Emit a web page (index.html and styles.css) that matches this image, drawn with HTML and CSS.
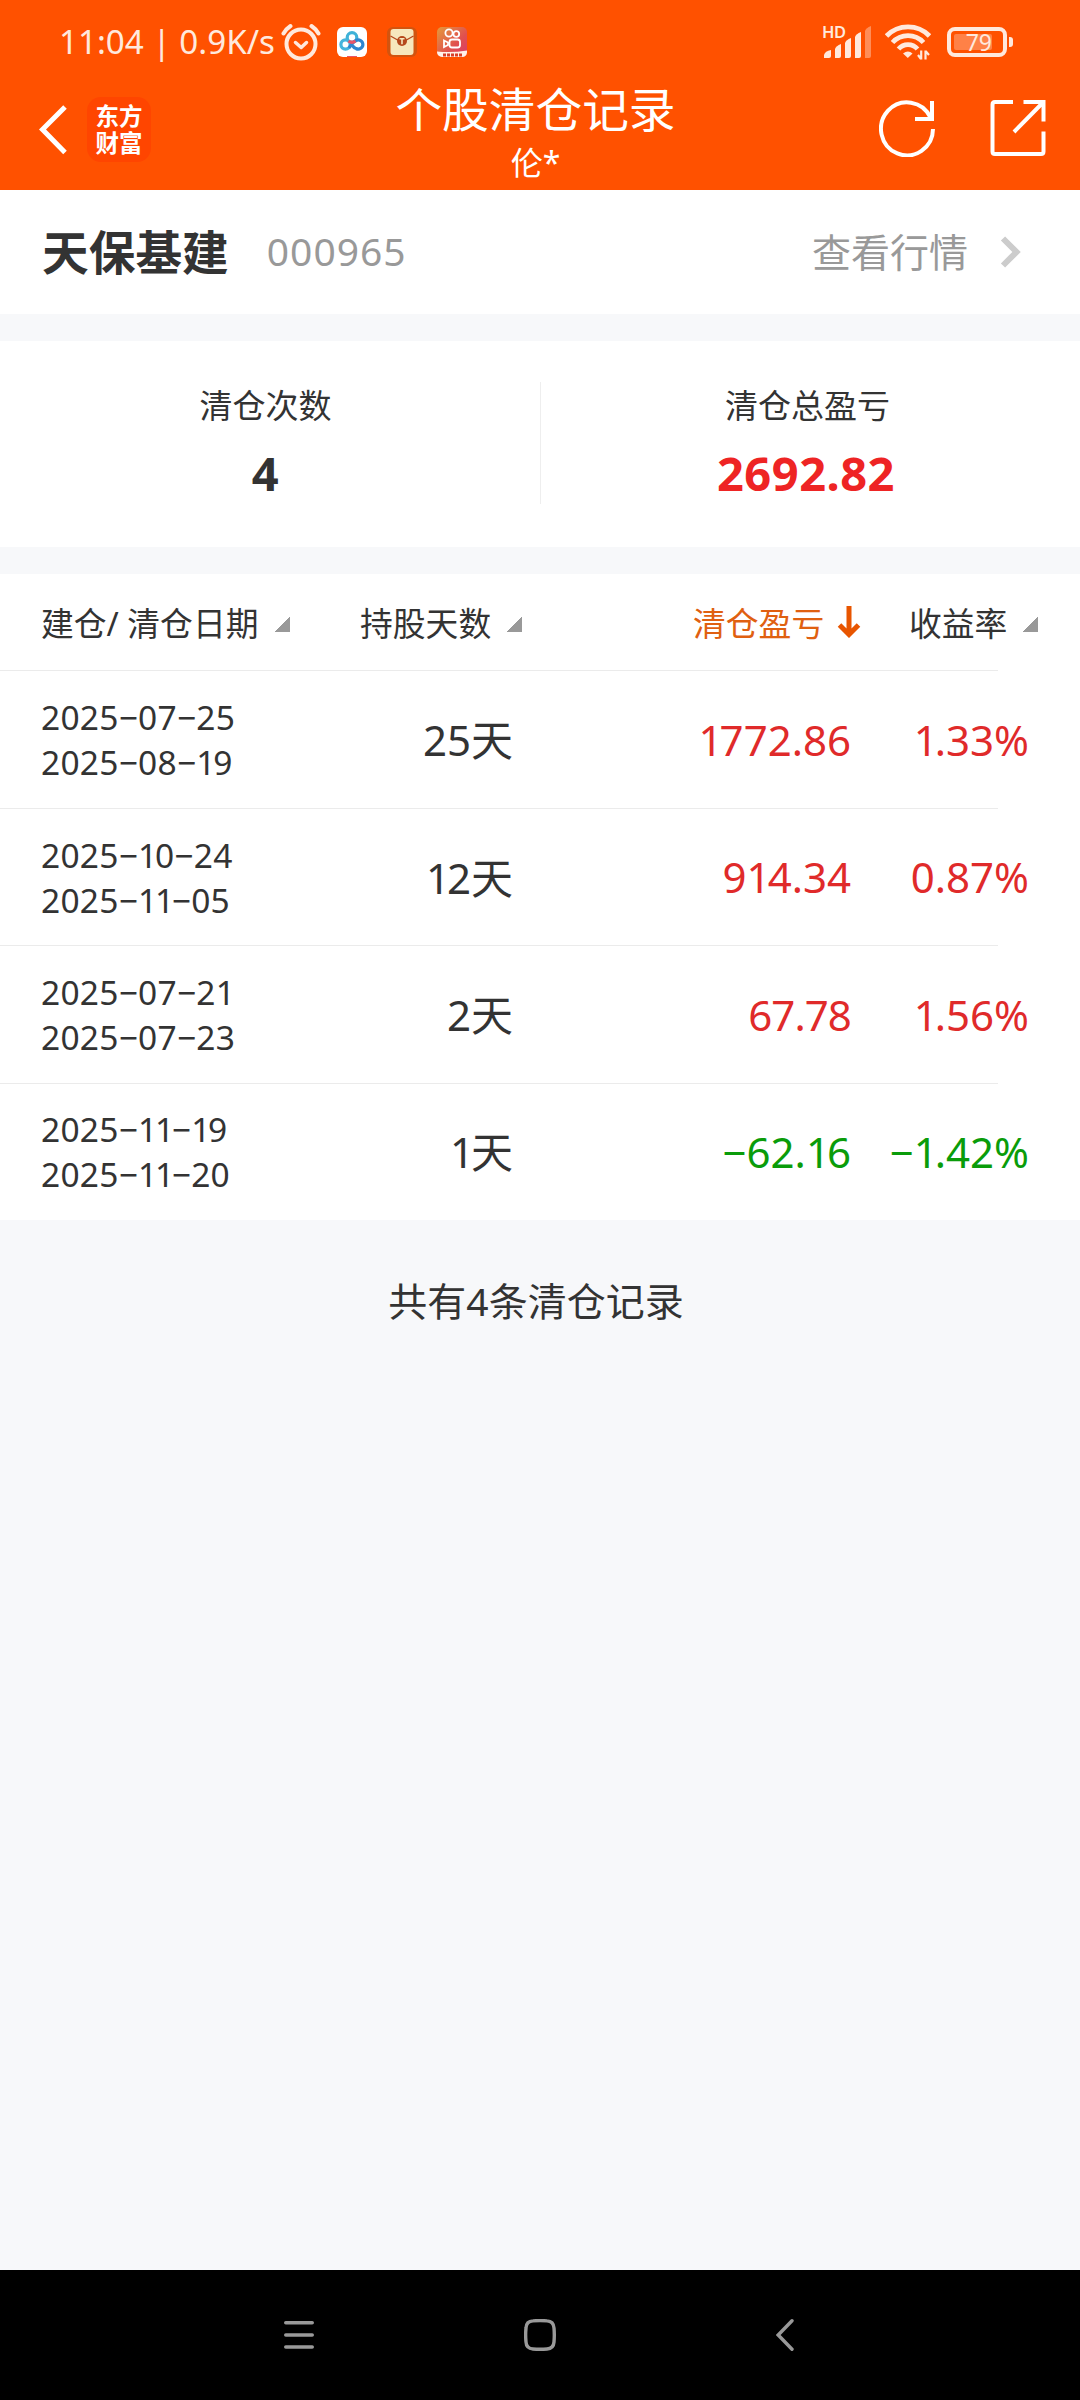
FILE: index.html
```html
<!DOCTYPE html>
<html lang="zh-CN">
<head>
<meta charset="utf-8">
<title>个股清仓记录</title>
<link rel="stylesheet" href="styles.css">
</head>
<body>
<div class="screen">
  <header class="header">
    <div class="status">
      <span class="clock">11:04 | 0.9K/s</span>
      <svg class="alarm" width="40" height="38" viewBox="0 0 40 38" fill="none" stroke="#ffe9dd" stroke-linecap="round" stroke-linejoin="round">
        <circle cx="20" cy="21" r="14.500" stroke-width="4"/>
        <path d="M14.500 19.500l5.700 5 5.300-5" stroke-width="3.500"/>
        <path d="M2.500 10.500Q5 6 9.500 3M37.500 10.500Q35 6 30.500 3" stroke-width="4"/>
      </svg>
      <svg class="app app-cloud" width="30" height="30" viewBox="0 0 30 30">
        <rect width="30" height="30" rx="6" fill="#fff"/>
        <g fill="none" stroke-width="3.200">
          <circle cx="15" cy="10.500" r="4.800" stroke="#3fb2d8"/>
          <circle cx="8.500" cy="17.500" r="4.600" stroke="#45b4dc"/>
          <path d="M12 21q4-6.500 7-7.500a4.600 4.600 0 1 1 0 8q-2-.5-4-3.500" stroke="#2f86cf"/>
          <path d="M11.500 14q3.500 2.500 7 0" stroke="#e8556a"/>
        </g>
        <path d="M10 29.500h10" stroke="#e8556a"/>
      </svg>
      <svg class="app app-mail" width="30" height="30" viewBox="0 0 30 30">
        <rect width="30" height="30" rx="6" fill="#d2540f"/>
        <rect x="3.500" y="2" width="23" height="26" rx="3" fill="#f6e7bd"/>
        <path d="M3.500 9l8 4.500M26.500 9l-8 4.500" stroke="#b5471b" stroke-width="1.300"/>
        <circle cx="15" cy="14" r="5" fill="#b5471b"/>
        <path d="M12.500 11.800h5M15 11.800v5.500" stroke="#f6e7bd" stroke-width="1.600"/>
      </svg>
      <svg class="app app-cam" width="30" height="30" viewBox="0 0 30 30">
        <defs><linearGradient id="cam" x1="0" y1="0" x2="1" y2="1"><stop offset="0" stop-color="#e59a3a"/><stop offset=".6" stop-color="#e0504f"/><stop offset="1" stop-color="#d83a6a"/></linearGradient></defs>
        <rect width="30" height="30" rx="5" fill="url(#cam)"/>
        <g fill="none" stroke="#fff" stroke-width="1.800">
          <circle cx="12" cy="6" r="3.600"/><circle cx="19.300" cy="7" r="2.900"/>
          <rect x="12.500" y="12.500" width="10.500" height="8" rx="2.500"/>
          <path d="M7 13.500l4 2v2.500l-4 2z"/>
        </g>
        <path d="M0 24.500q15 1.500 30-1v2a5 5 0 0 1-5 4.500h-20a5 5 0 0 1-5-5z" fill="#fff2ea"/>
        <path d="M6 28h19" stroke="#d8402a" stroke-width="3" stroke-dasharray="3 1"/>
      </svg>
      <span class="grow"></span>
      <svg class="signal" width="50" height="36" viewBox="0 0 50 36">
        <text x="0" y="14" class="hd" textLength="24">HD</text>
        <g fill="#ffe9dd">
          <path d="M2 34v-3q1-4 7-5v6q0 2-2 2z"/><path d="M13 34v-9q1-3 6-5v12q0 2-2 2z"/><path d="M23 34v-15q1-3 6-5v18q0 2-2 2z"/><path d="M33 34v-21q1-3 6-5v24q0 2-2 2z"/>
          <path d="M43 34v-27q1-3 6-5v30q0 2-2 2z" opacity=".4"/>
        </g>
      </svg>
      <svg class="wifi" width="46" height="36" viewBox="0 0 46 36" fill="none" stroke="#ffe9dd" stroke-width="4.800">
        <path d="M1.500 12a30 30 0 0 1 43 0M7.500 18.500a21 21 0 0 1 31 0M13.500 25a12.500 12.500 0 0 1 19 0"/>
        <path d="M18 29.500q5-4 9.500 0l-4.700 4.500z" fill="#ffe9dd" stroke="none"/>
        <path d="M36.200 26.500v9M33 31l3 4M40.500 35.500v-9M44 31l-3.500-4" stroke-width="2.200"/>
      </svg>
      <div class="battery"><span class="charge">79</span></div>
    </div>
    <div class="titlebar">
      <svg class="back" width="28" height="50" viewBox="0 0 28 50" fill="none" stroke="#fff" stroke-width="5"><path d="M26 2L3.500 24.500 26 47.500"/></svg>
      <div class="logo"><span>东方</span><span>财富</span></div>
      <div class="heading"><h1>个股清仓记录</h1><p>伦*</p></div>
      <svg class="reload" width="57" height="58" viewBox="0 0 57 58" fill="none" stroke="#fff" stroke-width="4">
        <path d="M54 30A26 26.500 0 1 1 51.500 18.500"/><path d="M53 2v18H36"/>
      </svg>
      <svg class="share" width="56" height="58" viewBox="0 0 56 58" fill="none" stroke="#fff" stroke-width="4">
        <path d="M23 3H5Q2.500 3 2.500 5.500V52.500Q2.500 55 5 55H51Q53.500 55 53.500 52.500V32.500"/><path d="M33.500 3H53.500V22.500M53 3.500L24 33"/>
      </svg>
    </div>
  </header>

  <section class="stock">
    <h2>天保基建</h2>
    <span class="code">000965</span>
    <a class="quote">查看行情</a>
    <svg width="22" height="34" viewBox="0 0 22 34" fill="none" stroke="#ccc" stroke-width="6"><path d="M3 3.500L16.500 17 3 30.500"/></svg>
  </section>

  <section class="summary">
    <div class="stat"><span class="label">清仓次数</span><strong>4</strong></div>
    <div class="rule"></div>
    <div class="stat"><span class="label">清仓总盈亏</span><strong class="total">2692.82</strong></div>
  </section>

  <section class="table">
    <div class="row head">
      <div class="c-date">建仓/ 清仓日期<i class="tri"></i></div>
      <div class="c-days">持股天数<i class="tri"></i></div>
      <div class="c-gain active">清仓盈亏<svg width="24" height="32" viewBox="0 0 24 32" fill="none" stroke="#e85500" stroke-width="5"><path d="M12 0v28M2.500 19L12 28.500 21.500 19"/></svg></div>
      <div class="c-rate">收益率<i class="tri"></i></div>
    </div>
    <div class="row">
      <div class="c-date"><span>2025−07−25</span><span>2025−08−<b>1</b>9</span></div>
      <div class="c-days">25天</div><div class="c-gain up"><b>1</b>772.86</div><div class="c-rate up"><b>1</b>.33<em>%</em></div>
    </div>
    <div class="row short">
      <div class="c-date"><span>2025−<b>1</b>0−24</span><span>2025−<b>1</b><b>1</b>−05</span></div>
      <div class="c-days"><b>1</b>2天</div><div class="c-gain up">9<b>1</b>4.34</div><div class="c-rate up">0.87<em>%</em></div>
    </div>
    <div class="row">
      <div class="c-date"><span>2025−07−2<b>1</b></span><span>2025−07−23</span></div>
      <div class="c-days">2天</div><div class="c-gain tight up">67.78</div><div class="c-rate up"><b>1</b>.56<em>%</em></div>
    </div>
    <div class="row last">
      <div class="c-date"><span>2025−<b>1</b><b>1</b>−<b>1</b>9</span><span>2025−<b>1</b><b>1</b>−20</span></div>
      <div class="c-days"><b>1</b>天</div><div class="c-gain down">−62.<b>1</b>6</div><div class="c-rate down">−<b>1</b>.42<em>%</em></div>
    </div>
  </section>

  <p class="count">共有4条清仓记录</p>

  <nav class="nav">
    <svg width="30" height="32" viewBox="0 0 30 32" stroke="#999" stroke-width="3.600" stroke-linecap="round"><path d="M1.800 3.800h26.400M1.800 16h26.400M1.800 28h26.400"/></svg>
    <svg width="32" height="32" viewBox="0 0 32 32" fill="none" stroke="#999" stroke-width="3.400"><path d="M9 1.900Q16 1.300 23 1.900 29.500 2.200 30 9 30.600 16 30 23 29.500 29.500 23 30 16 30.600 9 30 2.300 29.500 2 23 1.300 16 2 9 2.300 2.200 9 1.900z"/></svg>
    <svg width="18" height="32" viewBox="0 0 18 32" fill="none" stroke="#999" stroke-width="3.400" stroke-linecap="round"><path d="M16 1.800L2.200 16 16 30.200"/></svg>
  </nav>
</div>
</body>
</html>
```

FILE: styles.css
```css
* { box-sizing: border-box; margin: 0; padding: 0; }
body { width: 1080px; background: #f7f8fa; font-family: "Noto Sans", "Noto Sans CJK SC", sans-serif; color: #333; }
svg { display: block; flex: none; }
.screen { display: flex; flex-direction: column; height: 2400px; }
.header { height: 190px; background: #ff5100; color: #fff; display: flex; flex-direction: column; }

.status { height: 84px; padding: 0 73px 0 59px; display: flex; align-items: center; color: #ffe9dd; }
.clock { width: 222px; font-size: 33.200px; line-height: 84px; white-space: pre; }
.app { margin-left: 20px; }
.app-cloud { margin-left: 16px; }
.grow { flex: 1; }
.hd { font: 600 16.500px "Noto Sans", sans-serif; fill: #ffe9dd; }
.wifi { margin-left: 13px; }
.battery { margin-left: 16px; width: 60px; height: 30px; border: 4px solid #ffe9dd; border-radius: 8px; padding: 3px; position: relative; }
.battery::after { content: ""; position: absolute; right: -10px; top: 6px; width: 4px; height: 10px; border-radius: 0 3px 3px 0; background: #ffe9dd; }
.charge { display: block; width: 38px; height: 16px; border-radius: 2px; background: rgba(255, 255, 255, .28); font-size: 23px; line-height: 17px; text-align: right; }

.titlebar { height: 106px; padding: 0 34px 0 39px; display: flex; }
.back { margin-top: 21px; }
.logo { margin: 13px 0 0 20px; width: 64px; height: 65px; border-radius: 14px; background: #ff4500; display: flex; flex-direction: column; align-items: center; padding-top: 5px; font: 700 23.500px/27px "Noto Sans CJK SC", sans-serif; }
.heading { flex: 1; text-align: center; margin-left: 41px; }
.heading h1 { font-weight: 400; font-size: 46.700px; line-height: 50px; }
.heading p { font-size: 32px; line-height: 57px; }
.reload { margin-top: 15px; }
.share { margin: 15px 0 0 54px; }

.stock { height: 124px; background: #fff; padding: 0 58px 0 42px; display: flex; align-items: center; }
.stock h2 { font-size: 46.700px; font-weight: 700; padding-bottom: 4px; }
.code { margin-left: 38px; font-size: 39px; letter-spacing: 1px; color: #999; flex: 1; padding-bottom: 3px; }
.quote { font-size: 39px; color: #999; margin-right: 32px; padding-bottom: 4px; }

.summary { margin-top: 27px; height: 206px; background: #fff; padding-right: 6px; display: flex; }
.stat { flex: 1; padding-top: 41px; display: flex; flex-direction: column; align-items: center; }
.stat:first-child { flex: none; width: 540px; padding-right: 9px; }
.label { font-size: 33px; line-height: 48px; }
.stat strong { font-size: 47px; line-height: 70px; margin-top: 8px; letter-spacing: .5px; }
.stat .total { color: #ee2424; margin-right: 3px; }
.rule { width: 1px; height: 122px; margin-top: 41px; background: #eee; }

.table { margin-top: 27px; background: #fff; }
.row { height: 138px; display: grid; grid-template-columns: 361px 164px 326px 178px; align-items: center; font-size: 42px; background: linear-gradient(#ebebeb, #ebebeb) 0 100% / 998px 1px no-repeat; }
.row.head { height: 97px; grid-template-columns: 360px 333px 216px 170px; font-size: 32.800px; padding-bottom: 2px; }
.head > div { display: flex; align-items: center; white-space: pre; }
.short { height: 137px; }
.row.last { height: 136px; background: none; }
.c-date { padding-left: 41px; }
.row:not(.head) .c-date { font-size: 33.500px; line-height: 45px; letter-spacing: .25px; display: flex; flex-direction: column; }
.row:not(.head) .c-days { text-align: right; padding: 0 12px 5px 0; }
.row:not(.head) .c-gain, .row:not(.head) .c-rate { text-align: right; padding-bottom: 2px; }
.row b { font-weight: 400; letter-spacing: -.07em; }
.row em { font-style: normal; letter-spacing: 0; }
.tight { letter-spacing: -.9px; }
.tri { width: 16px; height: 15px; margin: 5px 0 0 15px; background: linear-gradient(135deg, transparent 50%, #999 50%); }
.active { color: #e06010; }
.active svg { margin: 0 0 0 13px; }
.up { color: #e02a2a; }
.down { color: #0a9c0a; }

.count { margin-top: 53px; padding-right: 8px; text-align: center; font-size: 39px; line-height: 56px; }
.nav { margin-top: auto; height: 130px; background: #000; display: flex; align-items: center; padding-left: 284px; }
.nav svg:nth-child(2) { margin-left: 210px; }
.nav svg:nth-child(3) { margin-left: 220px; }
```
